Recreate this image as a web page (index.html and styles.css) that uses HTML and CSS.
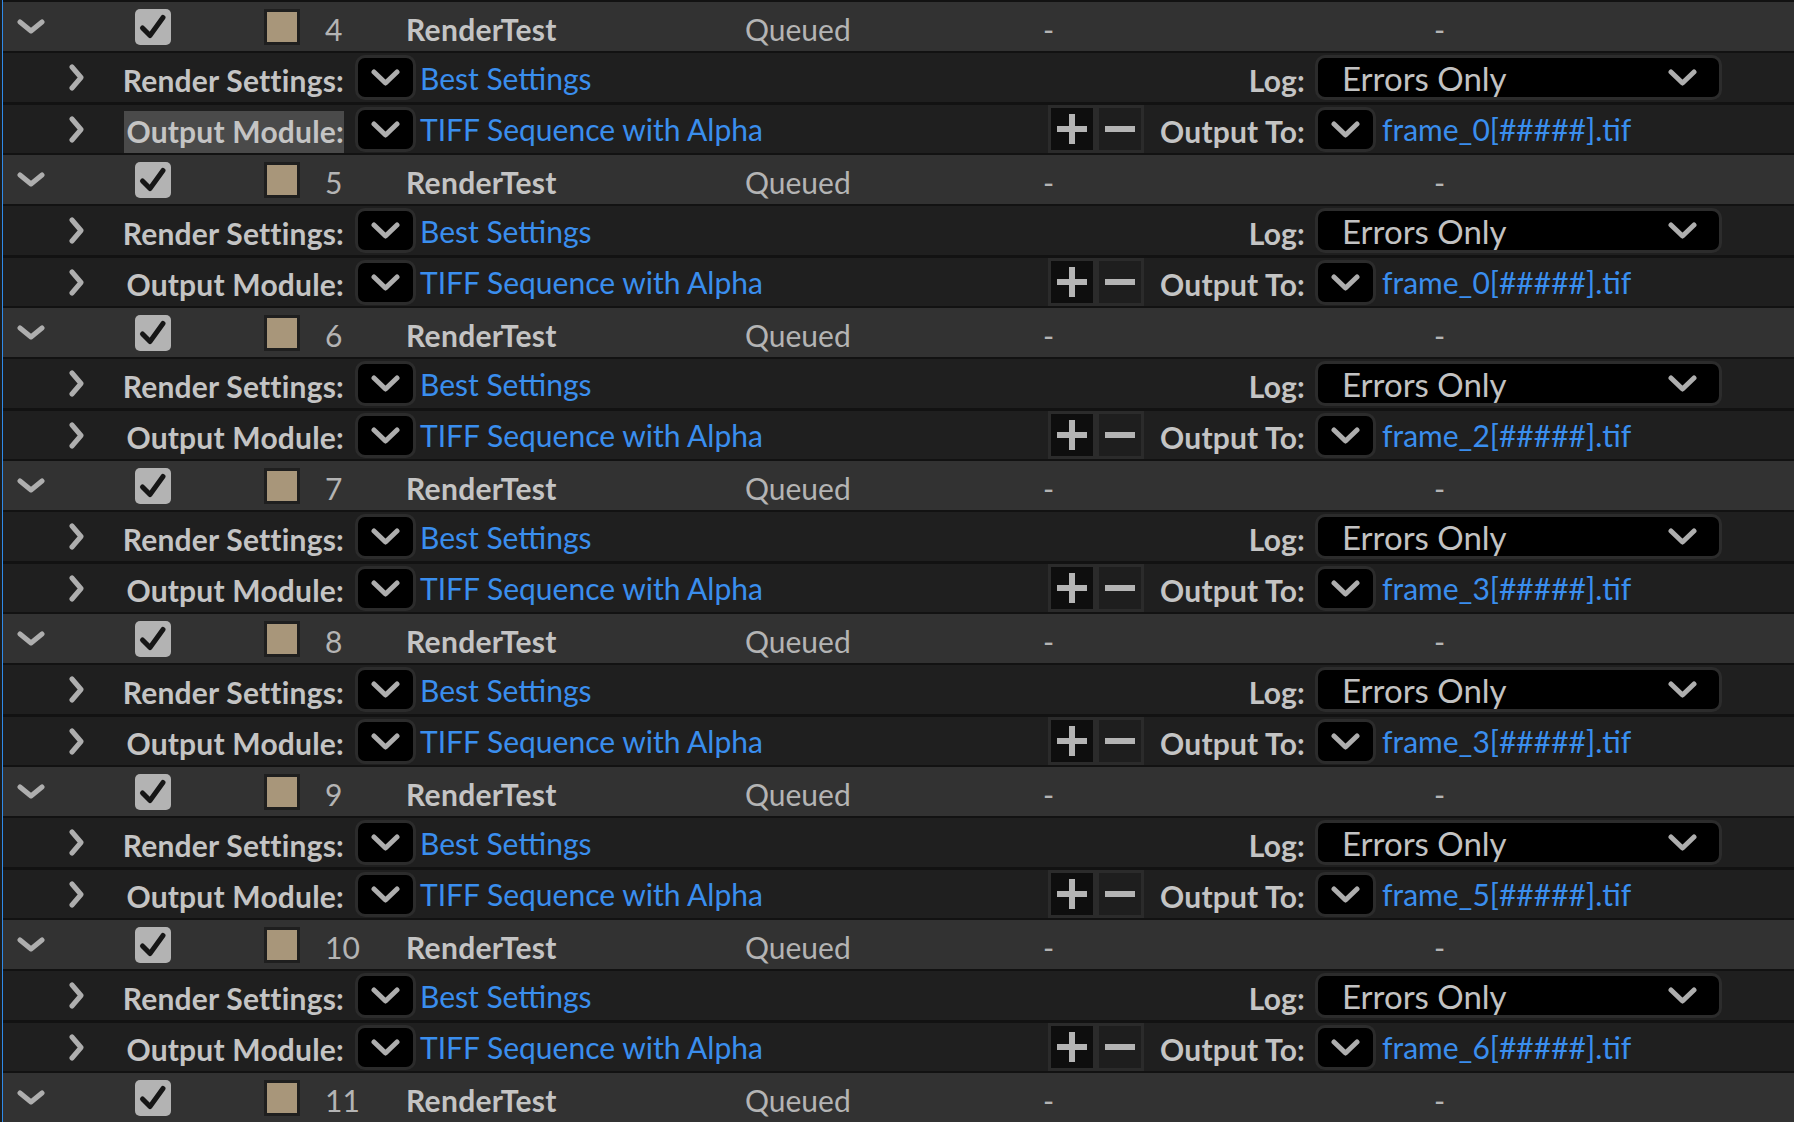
FILE: index.html
```html
<!DOCTYPE html>
<html>
<head>
<meta charset="utf-8">
<link rel="stylesheet" href="styles.css">
</head>
<body>
<div class="panel">
<div class="list">

<!-- job 4 -->
<div class="job">
  <div class="c-twisty"><svg class="i-down" viewBox="0 0 28 15"><path d="M3 3 L14 12 L25 3"/></svg></div>
  <div class="c-check"><span class="check"><svg viewBox="0 0 36 36"><path d="M7.5 19 L15 26.5 L28 8.5"/></svg></span></div>
  <div class="c-swatch"><span class="swatch"></span></div>
  <div class="c-num">4</div>
  <div class="c-name">RenderTest</div>
  <div class="c-status">Queued</div>
  <div class="c-dash">-</div>
  <div class="c-dash">-</div>
</div>
<div class="sub sub-rs">
  <div class="c-twisty"><svg class="i-right" viewBox="0 0 15 27"><path d="M3 3 L12 13.5 L3 24"/></svg></div>
  <div class="c-label">Render Settings:</div>
  <div class="c-dd"><span class="dd"><svg class="i-dd" viewBox="0 0 29 17"><path d="M3 3 L14.5 14 L26 3"/></svg></span></div>
  <div class="c-value">Best Settings</div>
  <div class="c-pm"></div>
  <div class="c-label2">Log:</div>
  <div class="c-last"><span class="dd dd-wide"><span class="dd-text">Errors Only</span><svg class="i-dd" viewBox="0 0 29 17"><path d="M3 3 L14.5 14 L26 3"/></svg></span></div>
</div>
<div class="sub sub-om">
  <div class="c-twisty"><svg class="i-right" viewBox="0 0 15 27"><path d="M3 3 L12 13.5 L3 24"/></svg></div>
  <div class="c-label"><span class="selected">Output Module:</span></div>
  <div class="c-dd"><span class="dd"><svg class="i-dd" viewBox="0 0 29 17"><path d="M3 3 L14.5 14 L26 3"/></svg></span></div>
  <div class="c-value">TIFF Sequence with Alpha</div>
  <div class="c-pm"><span class="pm"><span class="btn btn-plus"><svg viewBox="0 0 42 42"><path d="M6 21 H36 M21 6 V36"/></svg></span><span class="btn btn-minus"><svg viewBox="0 0 42 42"><path d="M6 21 H36"/></svg></span></span></div>
  <div class="c-label2">Output To:</div>
  <div class="c-last"><span class="dd"><svg class="i-dd" viewBox="0 0 29 17"><path d="M3 3 L14.5 14 L26 3"/></svg></span><span class="c-value">frame_0[#####].tif</span></div>
</div>

<!-- job 5 -->
<div class="job">
  <div class="c-twisty"><svg class="i-down" viewBox="0 0 28 15"><path d="M3 3 L14 12 L25 3"/></svg></div>
  <div class="c-check"><span class="check"><svg viewBox="0 0 36 36"><path d="M7.5 19 L15 26.5 L28 8.5"/></svg></span></div>
  <div class="c-swatch"><span class="swatch"></span></div>
  <div class="c-num">5</div>
  <div class="c-name">RenderTest</div>
  <div class="c-status">Queued</div>
  <div class="c-dash">-</div>
  <div class="c-dash">-</div>
</div>
<div class="sub sub-rs">
  <div class="c-twisty"><svg class="i-right" viewBox="0 0 15 27"><path d="M3 3 L12 13.5 L3 24"/></svg></div>
  <div class="c-label">Render Settings:</div>
  <div class="c-dd"><span class="dd"><svg class="i-dd" viewBox="0 0 29 17"><path d="M3 3 L14.5 14 L26 3"/></svg></span></div>
  <div class="c-value">Best Settings</div>
  <div class="c-pm"></div>
  <div class="c-label2">Log:</div>
  <div class="c-last"><span class="dd dd-wide"><span class="dd-text">Errors Only</span><svg class="i-dd" viewBox="0 0 29 17"><path d="M3 3 L14.5 14 L26 3"/></svg></span></div>
</div>
<div class="sub sub-om">
  <div class="c-twisty"><svg class="i-right" viewBox="0 0 15 27"><path d="M3 3 L12 13.5 L3 24"/></svg></div>
  <div class="c-label">Output Module:</div>
  <div class="c-dd"><span class="dd"><svg class="i-dd" viewBox="0 0 29 17"><path d="M3 3 L14.5 14 L26 3"/></svg></span></div>
  <div class="c-value">TIFF Sequence with Alpha</div>
  <div class="c-pm"><span class="pm"><span class="btn btn-plus"><svg viewBox="0 0 42 42"><path d="M6 21 H36 M21 6 V36"/></svg></span><span class="btn btn-minus"><svg viewBox="0 0 42 42"><path d="M6 21 H36"/></svg></span></span></div>
  <div class="c-label2">Output To:</div>
  <div class="c-last"><span class="dd"><svg class="i-dd" viewBox="0 0 29 17"><path d="M3 3 L14.5 14 L26 3"/></svg></span><span class="c-value">frame_0[#####].tif</span></div>
</div>

<!-- job 6 -->
<div class="job">
  <div class="c-twisty"><svg class="i-down" viewBox="0 0 28 15"><path d="M3 3 L14 12 L25 3"/></svg></div>
  <div class="c-check"><span class="check"><svg viewBox="0 0 36 36"><path d="M7.5 19 L15 26.5 L28 8.5"/></svg></span></div>
  <div class="c-swatch"><span class="swatch"></span></div>
  <div class="c-num">6</div>
  <div class="c-name">RenderTest</div>
  <div class="c-status">Queued</div>
  <div class="c-dash">-</div>
  <div class="c-dash">-</div>
</div>
<div class="sub sub-rs">
  <div class="c-twisty"><svg class="i-right" viewBox="0 0 15 27"><path d="M3 3 L12 13.5 L3 24"/></svg></div>
  <div class="c-label">Render Settings:</div>
  <div class="c-dd"><span class="dd"><svg class="i-dd" viewBox="0 0 29 17"><path d="M3 3 L14.5 14 L26 3"/></svg></span></div>
  <div class="c-value">Best Settings</div>
  <div class="c-pm"></div>
  <div class="c-label2">Log:</div>
  <div class="c-last"><span class="dd dd-wide"><span class="dd-text">Errors Only</span><svg class="i-dd" viewBox="0 0 29 17"><path d="M3 3 L14.5 14 L26 3"/></svg></span></div>
</div>
<div class="sub sub-om">
  <div class="c-twisty"><svg class="i-right" viewBox="0 0 15 27"><path d="M3 3 L12 13.5 L3 24"/></svg></div>
  <div class="c-label">Output Module:</div>
  <div class="c-dd"><span class="dd"><svg class="i-dd" viewBox="0 0 29 17"><path d="M3 3 L14.5 14 L26 3"/></svg></span></div>
  <div class="c-value">TIFF Sequence with Alpha</div>
  <div class="c-pm"><span class="pm"><span class="btn btn-plus"><svg viewBox="0 0 42 42"><path d="M6 21 H36 M21 6 V36"/></svg></span><span class="btn btn-minus"><svg viewBox="0 0 42 42"><path d="M6 21 H36"/></svg></span></span></div>
  <div class="c-label2">Output To:</div>
  <div class="c-last"><span class="dd"><svg class="i-dd" viewBox="0 0 29 17"><path d="M3 3 L14.5 14 L26 3"/></svg></span><span class="c-value">frame_2[#####].tif</span></div>
</div>

<!-- job 7 -->
<div class="job">
  <div class="c-twisty"><svg class="i-down" viewBox="0 0 28 15"><path d="M3 3 L14 12 L25 3"/></svg></div>
  <div class="c-check"><span class="check"><svg viewBox="0 0 36 36"><path d="M7.5 19 L15 26.5 L28 8.5"/></svg></span></div>
  <div class="c-swatch"><span class="swatch"></span></div>
  <div class="c-num">7</div>
  <div class="c-name">RenderTest</div>
  <div class="c-status">Queued</div>
  <div class="c-dash">-</div>
  <div class="c-dash">-</div>
</div>
<div class="sub sub-rs">
  <div class="c-twisty"><svg class="i-right" viewBox="0 0 15 27"><path d="M3 3 L12 13.5 L3 24"/></svg></div>
  <div class="c-label">Render Settings:</div>
  <div class="c-dd"><span class="dd"><svg class="i-dd" viewBox="0 0 29 17"><path d="M3 3 L14.5 14 L26 3"/></svg></span></div>
  <div class="c-value">Best Settings</div>
  <div class="c-pm"></div>
  <div class="c-label2">Log:</div>
  <div class="c-last"><span class="dd dd-wide"><span class="dd-text">Errors Only</span><svg class="i-dd" viewBox="0 0 29 17"><path d="M3 3 L14.5 14 L26 3"/></svg></span></div>
</div>
<div class="sub sub-om">
  <div class="c-twisty"><svg class="i-right" viewBox="0 0 15 27"><path d="M3 3 L12 13.5 L3 24"/></svg></div>
  <div class="c-label">Output Module:</div>
  <div class="c-dd"><span class="dd"><svg class="i-dd" viewBox="0 0 29 17"><path d="M3 3 L14.5 14 L26 3"/></svg></span></div>
  <div class="c-value">TIFF Sequence with Alpha</div>
  <div class="c-pm"><span class="pm"><span class="btn btn-plus"><svg viewBox="0 0 42 42"><path d="M6 21 H36 M21 6 V36"/></svg></span><span class="btn btn-minus"><svg viewBox="0 0 42 42"><path d="M6 21 H36"/></svg></span></span></div>
  <div class="c-label2">Output To:</div>
  <div class="c-last"><span class="dd"><svg class="i-dd" viewBox="0 0 29 17"><path d="M3 3 L14.5 14 L26 3"/></svg></span><span class="c-value">frame_3[#####].tif</span></div>
</div>

<!-- job 8 -->
<div class="job">
  <div class="c-twisty"><svg class="i-down" viewBox="0 0 28 15"><path d="M3 3 L14 12 L25 3"/></svg></div>
  <div class="c-check"><span class="check"><svg viewBox="0 0 36 36"><path d="M7.5 19 L15 26.5 L28 8.5"/></svg></span></div>
  <div class="c-swatch"><span class="swatch"></span></div>
  <div class="c-num">8</div>
  <div class="c-name">RenderTest</div>
  <div class="c-status">Queued</div>
  <div class="c-dash">-</div>
  <div class="c-dash">-</div>
</div>
<div class="sub sub-rs">
  <div class="c-twisty"><svg class="i-right" viewBox="0 0 15 27"><path d="M3 3 L12 13.5 L3 24"/></svg></div>
  <div class="c-label">Render Settings:</div>
  <div class="c-dd"><span class="dd"><svg class="i-dd" viewBox="0 0 29 17"><path d="M3 3 L14.5 14 L26 3"/></svg></span></div>
  <div class="c-value">Best Settings</div>
  <div class="c-pm"></div>
  <div class="c-label2">Log:</div>
  <div class="c-last"><span class="dd dd-wide"><span class="dd-text">Errors Only</span><svg class="i-dd" viewBox="0 0 29 17"><path d="M3 3 L14.5 14 L26 3"/></svg></span></div>
</div>
<div class="sub sub-om">
  <div class="c-twisty"><svg class="i-right" viewBox="0 0 15 27"><path d="M3 3 L12 13.5 L3 24"/></svg></div>
  <div class="c-label">Output Module:</div>
  <div class="c-dd"><span class="dd"><svg class="i-dd" viewBox="0 0 29 17"><path d="M3 3 L14.5 14 L26 3"/></svg></span></div>
  <div class="c-value">TIFF Sequence with Alpha</div>
  <div class="c-pm"><span class="pm"><span class="btn btn-plus"><svg viewBox="0 0 42 42"><path d="M6 21 H36 M21 6 V36"/></svg></span><span class="btn btn-minus"><svg viewBox="0 0 42 42"><path d="M6 21 H36"/></svg></span></span></div>
  <div class="c-label2">Output To:</div>
  <div class="c-last"><span class="dd"><svg class="i-dd" viewBox="0 0 29 17"><path d="M3 3 L14.5 14 L26 3"/></svg></span><span class="c-value">frame_3[#####].tif</span></div>
</div>

<!-- job 9 -->
<div class="job">
  <div class="c-twisty"><svg class="i-down" viewBox="0 0 28 15"><path d="M3 3 L14 12 L25 3"/></svg></div>
  <div class="c-check"><span class="check"><svg viewBox="0 0 36 36"><path d="M7.5 19 L15 26.5 L28 8.5"/></svg></span></div>
  <div class="c-swatch"><span class="swatch"></span></div>
  <div class="c-num">9</div>
  <div class="c-name">RenderTest</div>
  <div class="c-status">Queued</div>
  <div class="c-dash">-</div>
  <div class="c-dash">-</div>
</div>
<div class="sub sub-rs">
  <div class="c-twisty"><svg class="i-right" viewBox="0 0 15 27"><path d="M3 3 L12 13.5 L3 24"/></svg></div>
  <div class="c-label">Render Settings:</div>
  <div class="c-dd"><span class="dd"><svg class="i-dd" viewBox="0 0 29 17"><path d="M3 3 L14.5 14 L26 3"/></svg></span></div>
  <div class="c-value">Best Settings</div>
  <div class="c-pm"></div>
  <div class="c-label2">Log:</div>
  <div class="c-last"><span class="dd dd-wide"><span class="dd-text">Errors Only</span><svg class="i-dd" viewBox="0 0 29 17"><path d="M3 3 L14.5 14 L26 3"/></svg></span></div>
</div>
<div class="sub sub-om">
  <div class="c-twisty"><svg class="i-right" viewBox="0 0 15 27"><path d="M3 3 L12 13.5 L3 24"/></svg></div>
  <div class="c-label">Output Module:</div>
  <div class="c-dd"><span class="dd"><svg class="i-dd" viewBox="0 0 29 17"><path d="M3 3 L14.5 14 L26 3"/></svg></span></div>
  <div class="c-value">TIFF Sequence with Alpha</div>
  <div class="c-pm"><span class="pm"><span class="btn btn-plus"><svg viewBox="0 0 42 42"><path d="M6 21 H36 M21 6 V36"/></svg></span><span class="btn btn-minus"><svg viewBox="0 0 42 42"><path d="M6 21 H36"/></svg></span></span></div>
  <div class="c-label2">Output To:</div>
  <div class="c-last"><span class="dd"><svg class="i-dd" viewBox="0 0 29 17"><path d="M3 3 L14.5 14 L26 3"/></svg></span><span class="c-value">frame_5[#####].tif</span></div>
</div>

<!-- job 10 -->
<div class="job">
  <div class="c-twisty"><svg class="i-down" viewBox="0 0 28 15"><path d="M3 3 L14 12 L25 3"/></svg></div>
  <div class="c-check"><span class="check"><svg viewBox="0 0 36 36"><path d="M7.5 19 L15 26.5 L28 8.5"/></svg></span></div>
  <div class="c-swatch"><span class="swatch"></span></div>
  <div class="c-num">10</div>
  <div class="c-name">RenderTest</div>
  <div class="c-status">Queued</div>
  <div class="c-dash">-</div>
  <div class="c-dash">-</div>
</div>
<div class="sub sub-rs">
  <div class="c-twisty"><svg class="i-right" viewBox="0 0 15 27"><path d="M3 3 L12 13.5 L3 24"/></svg></div>
  <div class="c-label">Render Settings:</div>
  <div class="c-dd"><span class="dd"><svg class="i-dd" viewBox="0 0 29 17"><path d="M3 3 L14.5 14 L26 3"/></svg></span></div>
  <div class="c-value">Best Settings</div>
  <div class="c-pm"></div>
  <div class="c-label2">Log:</div>
  <div class="c-last"><span class="dd dd-wide"><span class="dd-text">Errors Only</span><svg class="i-dd" viewBox="0 0 29 17"><path d="M3 3 L14.5 14 L26 3"/></svg></span></div>
</div>
<div class="sub sub-om">
  <div class="c-twisty"><svg class="i-right" viewBox="0 0 15 27"><path d="M3 3 L12 13.5 L3 24"/></svg></div>
  <div class="c-label">Output Module:</div>
  <div class="c-dd"><span class="dd"><svg class="i-dd" viewBox="0 0 29 17"><path d="M3 3 L14.5 14 L26 3"/></svg></span></div>
  <div class="c-value">TIFF Sequence with Alpha</div>
  <div class="c-pm"><span class="pm"><span class="btn btn-plus"><svg viewBox="0 0 42 42"><path d="M6 21 H36 M21 6 V36"/></svg></span><span class="btn btn-minus"><svg viewBox="0 0 42 42"><path d="M6 21 H36"/></svg></span></span></div>
  <div class="c-label2">Output To:</div>
  <div class="c-last"><span class="dd"><svg class="i-dd" viewBox="0 0 29 17"><path d="M3 3 L14.5 14 L26 3"/></svg></span><span class="c-value">frame_6[#####].tif</span></div>
</div>

<!-- job 11 -->
<div class="job">
  <div class="c-twisty"><svg class="i-down" viewBox="0 0 28 15"><path d="M3 3 L14 12 L25 3"/></svg></div>
  <div class="c-check"><span class="check"><svg viewBox="0 0 36 36"><path d="M7.5 19 L15 26.5 L28 8.5"/></svg></span></div>
  <div class="c-swatch"><span class="swatch"></span></div>
  <div class="c-num">11</div>
  <div class="c-name">RenderTest</div>
  <div class="c-status">Queued</div>
  <div class="c-dash">-</div>
  <div class="c-dash">-</div>
</div>

</div>
</div>
</body>
</html>
```

FILE: styles.css
```css
html, body {
  margin: 0;
  padding: 0;
  background: #121212;
  overflow: hidden;
}

body {
  font-family: Lato, "Open Sans", "Liberation Sans", sans-serif;
  font-size: 30px;
  color: #c2c2c2;
}

.panel {
  height: 1122px;
  border-left: 2px solid #1c1c1c;
  box-sizing: border-box;
  overflow: hidden;
}

.list {
  border-left: 1px solid #2f8ae8;
  height: 100%;
  padding-top: 2px;
  box-sizing: border-box;
  background: #121212;
}

/* job rows */
.job {
  display: grid;
  grid-template-columns: 132px 129px 61px 81px 339px 298px 391px 1fr;
  align-items: center;
  height: 49px;
  background: #323232;
  border-bottom: 2px solid #121212;
}

.job > div,
.sub > div {
  white-space: nowrap;
}

.c-twisty {
  display: flex;
  align-items: center;
  height: 100%;
}

.job .c-twisty {
  padding-left: 14px;
}

.i-down {
  width: 28px;
  height: 15px;
}

.i-down path,
.i-right path,
.i-dd path {
  fill: none;
  stroke: #aeaeae;
  stroke-width: 5;
  stroke-linecap: round;
  stroke-linejoin: round;
}

.c-check,
.c-swatch {
  display: flex;
  align-items: center;
}

.check {
  width: 36px;
  height: 36px;
  border-radius: 5px;
  background: #b3b3b3;
  display: block;
}

.check svg {
  display: block;
  width: 36px;
  height: 36px;
}

.check path {
  fill: none;
  stroke: #161616;
  stroke-width: 5;
  stroke-linecap: round;
  stroke-linejoin: round;
}

.swatch {
  display: block;
  width: 30px;
  height: 30px;
  background: #a8967a;
  border: 3px solid #1f1f1f;
}

.c-num,
.c-status,
.c-dash,
.c-name {
  padding-top: 4px;
}

.c-num,
.c-status,
.c-dash {
  color: #b4b4b4;
}

.c-name {
  font-weight: 700;
  letter-spacing: 0.3px;
  color: #c4c4c4;
}

/* sub rows */
.sub {
  display: grid;
  grid-template-columns: 97px 244px 76px 628px 96px 161px 1fr;
  align-items: center;
  background: #1f1f1f;
}

.sub-rs {
  height: 49px;
  border-bottom: 3px solid #121212;
}

.sub-om {
  height: 48px;
  border-bottom: 2px solid #121212;
}

.sub .c-twisty {
  padding-left: 66px;
}

.i-right {
  width: 15px;
  height: 27px;
}

.c-label,
.c-label2 {
  text-align: right;
  font-weight: 700;
  letter-spacing: 0.2px;
  color: #c4c4c4;
  padding-top: 4px;
}

.selected {
  background: #4a4a4a;
  padding: 2px 0 4px 2px;
}

.c-dd {
  display: flex;
  align-items: center;
  padding-left: 11px;
}

.dd {
  box-sizing: border-box;
  width: 61px;
  height: 45px;
  background: #000;
  border: 3px solid #2c2c2c;
  border-radius: 10px;
  display: flex;
  align-items: center;
  justify-content: center;
  flex: none;
}

.i-dd {
  width: 29px;
  height: 17px;
}

.c-value {
  color: #3a8eee;
  padding-top: 0;
}

.c-pm {
  display: flex;
  align-items: stretch;
  height: 100%;
}

.pm {
  display: flex;
  gap: 6px;
  padding: 3px;
  background: #2b2b2b;
  box-sizing: border-box;
  width: 96px;
}

.btn {
  width: 42px;
  height: 42px;
  display: block;
}

.btn svg {
  display: block;
  width: 42px;
  height: 42px;
}

.btn path {
  fill: none;
  stroke: #b4b4b4;
  stroke-width: 6;
}

.btn-plus {
  background: #0e0e0e;
}

.btn-minus {
  background: #1e1e1e;
}

.c-last {
  display: flex;
  align-items: center;
  padding-left: 10px;
  height: 100%;
}

.c-last .c-value {
  padding-left: 6px;
}

.dd-wide {
  width: 407px;
  justify-content: space-between;
  padding: 0 22px 0 24px;
}

.dd-text {
  color: #c2c2c2;
  font-size: 33px;
  padding-top: 0;
}
```
